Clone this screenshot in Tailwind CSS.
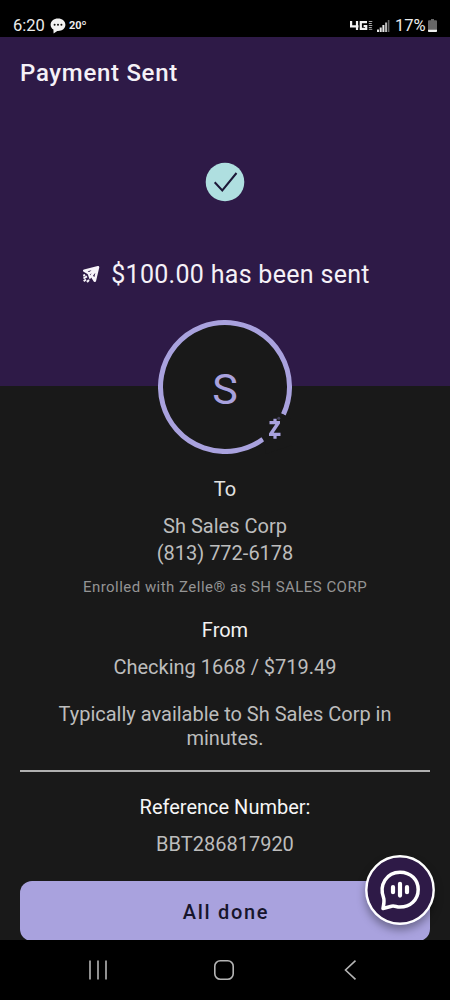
<!DOCTYPE html>
<html lang="en">
<head>
<meta charset="utf-8">
<meta name="viewport" content="width=device-width, initial-scale=1">
<title>Payment Sent</title>
<script src="https://cdn.jsdelivr.net/npm/@tailwindcss/browser@4"></script>
</head>
<body class="bg-black">
<div class="relative flex h-[1000px] w-[450px] flex-col overflow-hidden bg-[#191919] font-['Roboto',sans-serif]">
  <!-- Status bar -->
  <div class="flex h-[37px] shrink-0 items-end justify-between bg-black pr-[13px] pl-[13px] text-[#ececec]">
    <div class="flex h-[23px] items-center">
      <span class="w-[37px] text-[16.500px] leading-[23px] whitespace-nowrap">6:20</span>
      <svg class="mt-[1px] h-[16px] w-[16px]" viewBox="0 0 16 16"><path d="M8 .5C3.800.5.6 3.200.6 6.700c0 2 1.100 3.700 2.800 4.900L3.600 15.500 7.300 12.900C12 13.200 15.400 10.400 15.400 6.700 15.400 3.200 12.200.5 8 .5Z" fill="#f2f2f2"/><g fill="#111"><circle cx="4.600" cy="6.800" r="1"/><circle cx="8" cy="6.800" r="1"/><circle cx="11.400" cy="6.800" r="1"/></g></svg>
      <span class="ml-[3px] text-[11px] leading-[23px] font-bold">20º</span>
    </div>
    <div class="flex h-[23px] items-center">
      <svg class="mr-[4px] h-[11px] w-[24px]" viewBox="0 0 24 11" fill="none" stroke="#f2f2f2"><path d="M2.100 1V6.300H9.500M8 1V10" stroke-width="2.200"/><path d="M18 2.100H11.800V8.900H17.200V6H14.600" stroke-width="2.200"/><path d="M19.800 1.500H23.300M19.800 3.500H22.800M19.800 5.500H23.300M19.800 7.500H22.800M19.800 9.300H23.300" stroke-width="1" stroke="#aaa"/></svg>
      <svg class="mr-[5px] h-[12px] w-[13px]" viewBox="0 0 13 12" fill="#e6e6e6"><path d="M0 9.500h2V12H0zM2.700 7.500h2V12h-2zM5.400 5h2v7h-2z"/><path d="M8.100 2.500h2V12h-2z" fill="#bbb"/><path d="M10.800 0h1.600v12h-1.600z" fill="#666"/></svg>
      <span class="w-[33px] text-[16.500px] leading-[23px] whitespace-nowrap">17%</span>
      <svg class="h-[13px] w-[9px]" viewBox="0 0 9 13"><path d="M3 0h3v1.300h2q1 0 1 1V12q0 1-1 1H1q-1 0-1-1V2.300q0-1 1-1h2Z" fill="#666"/><path d="M0 10.800h9V12q0 1-1 1H1q-1 0-1-1Z" fill="#eee"/></svg>
    </div>
  </div>

  <!-- Confirmation header -->
  <header class="flex h-[349px] shrink-0 flex-col items-center bg-[#2e1a47] text-[#f5f1f7]">
    <h1 class="mt-[20px] w-full pl-[20px] text-[24px] leading-[32px] font-medium tracking-[0.700px]">Payment Sent</h1>
    <svg class="mt-[73px] h-[40px] w-[40px]" viewBox="0 0 40 40"><circle cx="20" cy="20" r="19.300" fill="#afdfe0"/><path d="M9.700 20.300 17.300 28.500 31.500 11" fill="none" stroke="#1d1838" stroke-width="2"/></svg>
    <div class="mt-[55px] flex items-center pl-[2px]">
      <svg class="mr-[11px] h-[18px] w-[18px]" viewBox="0 0 18 18" fill="none" stroke="#f7f3fa"><path d="M2.300 4.700 16 1.300 12.800 14.700 9.500 9.500 15.800 2 7 7.500Z" stroke-width="2.600" stroke-linejoin="round"/><path d="M6.500 7.500 8 11.500 9.800 9.500" stroke-width="2"/><path d="M1.200 9.700 3.200 8.900M1.500 12.500 5 10.400M1.700 15.300 4 13.500M5 16 7 14" stroke-width="2"/></svg>
      <p class="text-[25px] leading-[36px] tracking-[0.300px] whitespace-nowrap">$100.00 has been sent</p>
    </div>
  </header>

  <!-- Payment details -->
  <main class="flex flex-col items-center px-[20px] text-center text-[20px] leading-[24px] text-[#bdbdbd]">
    <svg class="-mt-[66px] h-[134px] w-[134px] shrink-0" viewBox="0 0 134 134"><circle cx="67" cy="67" r="64" fill="#191919"/><path d="M104.900 119.200A64.500 64.500 0 1 1 125.400 94.400" fill="none" stroke="#a9a2de" stroke-width="5"/><path d="M105 116.500 124.500 94 134 100 134 125 108 134Z" fill="#191919"/><text x="67" y="84" text-anchor="middle" font-size="43" fill="#a9a2de">S</text><path d="M111.500 101H122V103.600L115.700 112.800H122.500V116H111V113.400L117.300 104.200H111.500Z" fill="#a9a2de"/><path d="M117 98.800V102M117 115V118.800" stroke="#a9a2de" stroke-width="3.200"/><circle cx="120.800" cy="98.200" r="1.500" fill="#44415a"/></svg>
    <h2 class="mt-[23px] text-[#e2e2e2]">To</h2>
    <p class="mt-[12px] leading-[27px]">Sh Sales Corp</p>
    <p class="leading-[27px]">(813) 772-6178</p>
    <p class="mt-[10px] text-[15px] leading-[20px] tracking-[0.470px] text-[#949494]">Enrolled with Zelle® as SH SALES CORP</p>
    <h2 class="mt-[21px] text-[#f2f2f2]">From</h2>
    <p class="mt-[13px]">Checking 1668 / $719.49</p>
    <p class="mt-[23px] w-[370px]">Typically available to Sh Sales Corp in minutes.</p>
    <div class="mt-[20px] h-[2px] w-full bg-[#b0b0b0]"></div>
    <h2 class="mt-[23px] text-[#f6f6f6]">Reference Number:</h2>
    <p class="mt-[13px]">BBT286817920</p>
    <button class="mt-[25px] h-[60px] w-full shrink-0 rounded-[12px] bg-[#a9a2de] pt-[2px] pl-[2px] text-[20px] font-medium tracking-[1.700px] text-[#17152c]">All done</button>
  </main>

  <!-- Floating chat button -->
  <button class="absolute top-[855px] left-[365px] h-[70px] w-[70px] rounded-full shadow-[0_5px_9px_rgba(0,0,0,0.35)]" aria-label="Chat">
    <svg class="h-[70px] w-[70px]" viewBox="0 0 70 70"><circle cx="35" cy="35" r="33.700" fill="#2e1a47" stroke="#fff" stroke-width="2.400"/><path d="M18.500 42.500C14 30 21.500 17.200 35 17.200 46 17.200 53.200 25 53.200 34.500 53.200 45 45 52 35 52 31 52 30 50.500 26.500 51.200L18 53.500C18.500 50 19.800 46 18.500 42.500Z" fill="none" stroke="#fff" stroke-width="3.500" stroke-linejoin="round"/><path d="M28 32V37.200M35 28.800V40.600M42 32V37.200" stroke="#fff" stroke-width="4.200" stroke-linecap="round"/></svg>
  </button>

  <!-- System navigation -->
  <nav class="absolute inset-x-0 bottom-0 flex h-[60px] items-center bg-black pl-[87px]">
    <svg class="h-[20px] w-[22px]" viewBox="0 0 22 20" fill="none" stroke="#b5b5b5" stroke-width="1.600"><path d="M3 .5V19.500M11 .5V19.500M19 .5V19.500"/></svg>
    <svg class="ml-[105px] h-[20px] w-[20px]" viewBox="0 0 20 20" fill="none" stroke="#b5b5b5" stroke-width="1.600"><rect x=".8" y=".8" width="18.400" height="18.400" rx="5.500"/></svg>
    <svg class="ml-[109px] h-[20px] w-[14px]" viewBox="0 0 14 20" fill="none" stroke="#b5b5b5" stroke-width="1.600"><path d="M12.500.6 2.500 10 12.500 19.400"/></svg>
  </nav>
</div>
</body>
</html>
